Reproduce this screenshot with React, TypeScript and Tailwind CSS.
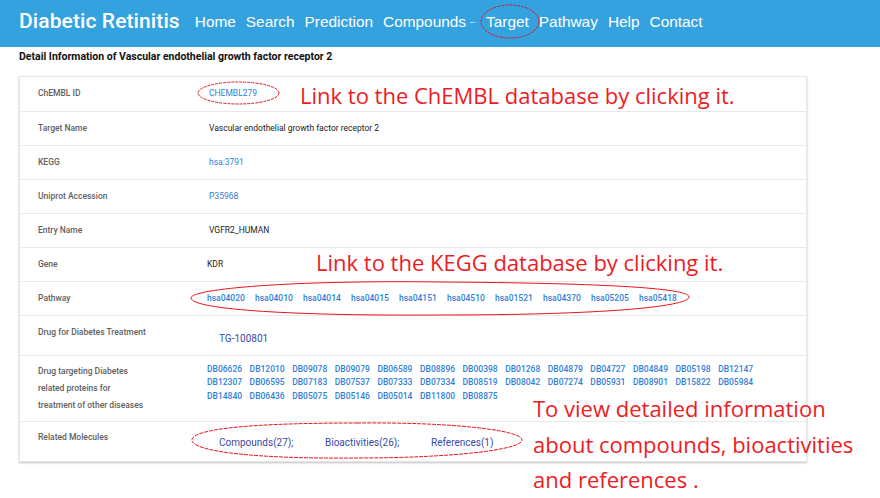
const navItems = ['Home', 'Search', 'Prediction', 'Compounds', 'Target', 'Pathway', 'Help', 'Contact']

const pathways = [
  'hsa04020', 'hsa04010', 'hsa04014', 'hsa04015', 'hsa04151',
  'hsa04510', 'hsa01521', 'hsa04370', 'hsa05205', 'hsa05418',
]

const drugs = [
  'DB06626', 'DB12010', 'DB09078', 'DB09079', 'DB06589', 'DB08896', 'DB00398', 'DB01268', 'DB04879', 'DB04727', 'DB04849', 'DB05198', 'DB12147',
  'DB12307', 'DB06595', 'DB07183', 'DB07537', 'DB07333', 'DB07334', 'DB08519', 'DB08042', 'DB07274', 'DB05931', 'DB08901', 'DB15822', 'DB05984',
  'DB14840', 'DB06436', 'DB05075', 'DB05146', 'DB05014', 'DB11800', 'DB08875',
]

const Row = ({ label, children, className }: { label: React.ReactNode; children: React.ReactNode; className: string }) => (
  <div className={`flex border-b border-[#e8e8e8] ${className}`}>
    <div className="w-[189px] shrink-0 pl-[18px] text-[8.5px] font-medium text-[#5f5f5f]">{label}</div>
    <div className="flex-1 text-[8.5px] text-[#222]">{children}</div>
  </div>
)

export default function App() {
  return (
    <div className="relative min-h-[498px] w-[880px] bg-white font-['Roboto',sans-serif]">
      <nav className="flex h-[47px] items-center bg-[#35a2e0] pb-[4px] pl-[19px] text-white">
        <span className="mr-[15px] text-[21px] font-medium tracking-[0.1px]">Diabetic Retinitis</span>
        <ul className="flex items-center gap-[10px] font-['Liberation_Sans',sans-serif] text-[15.4px]">
          {navItems.map((n) => (
            <li key={n} className="flex items-center">
              {n}
              {n === 'Compounds' && <span className="ml-[4px] mr-[1px] mt-[2px] h-[1px] w-[5px] bg-white/60" />}
            </li>
          ))}
        </ul>
      </nav>

      <h1 className="mt-[2px] pl-[19px] text-[10.5px] font-bold text-[#111]">
        Detail Information of Vascular endothelial growth factor receptor 2
      </h1>

      <div className="ml-[19px] mt-[11px] w-[788px] border border-[#e6e6e6] shadow-[0_1px_2px_rgba(0,0,0,0.25)]">
        <Row label="ChEMBL ID" className="h-[35px] items-center">
          <span className="text-[#2f7fd9]">CHEMBL279</span>
        </Row>
        <Row label="Target Name" className="h-[34px] items-center">
          Vascular endothelial growth factor receptor 2
        </Row>
        <Row label="KEGG" className="h-[34px] items-center">
          <span className="text-[#2f7fd9]">hsa:3791</span>
        </Row>
        <Row label="Uniprot Accession" className="h-[34px] items-center">
          <span className="text-[#2f7fd9]">P35968</span>
        </Row>
        <Row label="Entry Name" className="h-[34px] items-center">
          VGFR2_HUMAN
        </Row>
        <Row label="Gene" className="h-[34px] items-center">
          <span className="-ml-[2px]">KDR</span>
        </Row>
        <Row label="Pathway" className="h-[34px] items-center">
          <div className="-ml-[2px] flex gap-[10px] font-medium text-[#2f7fd9]">
            {pathways.map((p) => (
              <span key={p} className="w-[38px]">{p}</span>
            ))}
          </div>
        </Row>
        <Row label="Drug for Diabetes Treatment" className="h-[40px] items-start pt-[10px]">
          <span className="ml-[10px] mt-[5px] inline-block text-[10px] text-[#3a48a8]">TG-100801</span>
        </Row>
        <Row
          label={
            <div className="leading-[17px]">
              Drug targeting Diabetes
              <br />
              related proteins for
              <br />
              treatment of other diseases
            </div>
          }
          className="h-[66px] items-start pt-[7px]"
        >
          <div className="-ml-[2px] grid w-[560px] grid-cols-[repeat(13,42.6px)] font-medium leading-[13.5px] text-[#2f7fd9]">
            {drugs.map((d) => (
              <span key={d}>{d}</span>
            ))}
          </div>
        </Row>
        <div className="flex h-[39px] items-start pt-[9px]">
          <div className="w-[189px] shrink-0 pl-[18px] text-[8.5px] font-medium text-[#5f5f5f]">Related Molecules</div>
          <div className="mt-[4px] flex pl-[10px] text-[10px] text-[#3a48a8]">
            <span className="w-[106px]">Compounds(27);</span>
            <span className="w-[106px]">Bioactivities(26);</span>
            <span>References(1)</span>
          </div>
        </div>
      </div>

      {/* annotations */}
      <div className="pointer-events-none absolute inset-0 font-['Open_Sans',sans-serif] text-[#ed1c24]">
        <p className="absolute left-[300px] top-[80px] text-[22px] leading-[30px]">Link to the ChEMBL database by clicking it.</p>
        <p className="absolute left-[316px] top-[247px] text-[22px] leading-[30px]">Link to the KEGG database by clicking it.</p>
        <p className="absolute left-[533px] top-[391px] text-[22px] leading-[35.5px]">
          To view detailed information
          <br />
          about compounds, bioactivities
          <br />
          and references .
        </p>
        <svg className="absolute left-0 top-0" width="880" height="498" fill="none" stroke="#e8141e" strokeWidth="1">
          <ellipse cx="510" cy="21.5" rx="29" ry="16.5" strokeDasharray="3 1" />
          <ellipse cx="238.5" cy="93" rx="40.5" ry="11" strokeDasharray="3 1" />
          <path d="M440 282 C 600 283, 690 288, 689 297 C 688 307, 600 315, 440 315 C 300 316, 192 310, 191 298 C 190 289, 290 280, 440 282 Z" />
          <path d="M357 423 C 450 422, 522 430, 522 440 C 522 450, 450 458, 357 458 C 260 459, 192 452, 192 440 C 192 428, 260 423, 357 423 Z" strokeDasharray="4 1" />
        </svg>
      </div>
    </div>
  )
}
